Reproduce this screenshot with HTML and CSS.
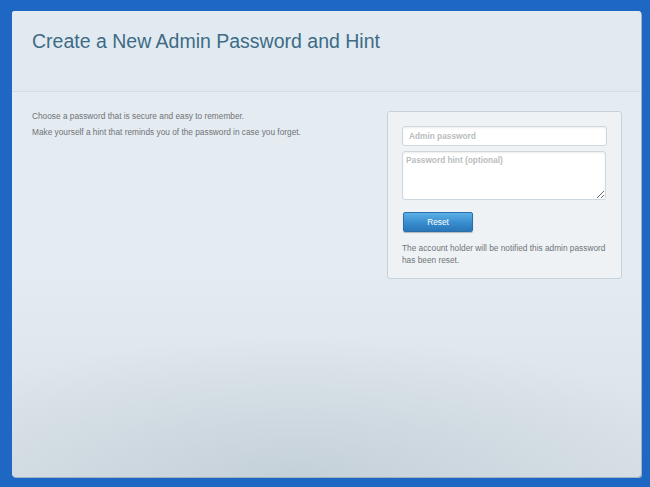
FILE: index.html
```html
<!DOCTYPE html>
<html>
<head>
<meta charset="utf-8">
<link rel="stylesheet" href="styles.css">
</head>
<body>
<div class="panel">
  <div class="header">
    <h1 class="title">Create a New Admin Password and Hint</h1>
  </div>
  <div class="content">
    <div class="intro">
      <p>Choose a password that is secure and easy to remember.</p>
      <p>Make yourself a hint that reminds you of the password in case you forget.</p>
    </div>
    <div class="box">
      <input class="field" type="text" placeholder="Admin password">
      <textarea class="hint" placeholder="Password hint (optional)"></textarea>
      <button class="reset">Reset</button>
      <p class="note">The account holder will be notified this admin password has been reset.</p>
    </div>
  </div>
</div>
</body>
</html>
```
FILE: styles.css
```css
html, body {
  margin: 0;
  padding: 0;
  height: 100%;
}
body {
  background: #1e68c4;
  font-family: "Liberation Sans", Arial, sans-serif;
  padding: 11px 9px 10px 12px;
  box-sizing: border-box;
}
.panel {
  height: 466px;
  border-radius: 3px;
  background:
    radial-gradient(ellipse 420px 140px at 45% 100%, rgba(180,195,205,0.55), rgba(180,195,205,0) 100%),
    linear-gradient(180deg, #e4ebf1 0%, #e4ebf1 55%, #d9e1e7 100%);
  box-shadow: 1px 1px 0 #9fb3c3;
  display: flex;
  flex-direction: column;
  overflow: hidden;
}
.header {
  height: 81px;
  border-bottom: 1px solid #d3dde5;
  background: #e1eaf1;
  padding: 0 20px;
  box-sizing: border-box;
}
.title {
  margin: 0;
  padding-top: 19px;
  font-size: 19.5px;
  font-weight: normal;
  color: #3e6a86;
}
.content {
  display: flex;
  justify-content: space-between;
  padding: 19px 19px 0 20px;
}
.intro {
  padding-top: 1px;
}
.intro p {
  margin: 0 0 7px 0;
  font-size: 8.3px;
  line-height: 9px;
  color: #6f7478;
}
.box {
  width: 235px;
  height: 168px;
  box-sizing: border-box;
  border: 1px solid #c6d1d9;
  border-radius: 3px;
  background: #eef2f5;
  padding: 14px 14px 0 14px;
  display: flex;
  flex-direction: column;
}
.field, .hint {
  font-family: "Liberation Sans", Arial, sans-serif;
  font-size: 8.3px;
  font-weight: bold;
  border: 1px solid #cdd7de;
  border-radius: 3px;
  background: #fff;
  box-shadow: inset 0 1px 2px rgba(0,0,0,0.08);
  outline: none;
  box-sizing: border-box;
  color: #333;
}
.field::placeholder, .hint::placeholder {
  color: #b9bdc0;
}
.field {
  width: 205px;
  height: 20px;
  padding: 0 6px;
}
.hint {
  width: 204px;
  height: 49px;
  margin-top: 5px;
  padding: 3px 3px;
  resize: vertical;
}
.reset {
  margin-top: 12px;
  margin-left: 1px;
  width: 70px;
  height: 20px;
  border: 1px solid #2a6fa8;
  border-radius: 2px;
  background: linear-gradient(180deg, #5cb1e8 0%, #3a8fd0 50%, #2a76b8 100%);
  color: #fff;
  font-family: "Liberation Sans", Arial, sans-serif;
  font-size: 8.3px;
  padding: 0;
  box-shadow: 0 1px 1px rgba(0,0,0,0.25);
}
.note {
  margin: 10px 0 0 0;
  font-size: 8.3px;
  line-height: 12px;
  color: #6f7478;
}
```
